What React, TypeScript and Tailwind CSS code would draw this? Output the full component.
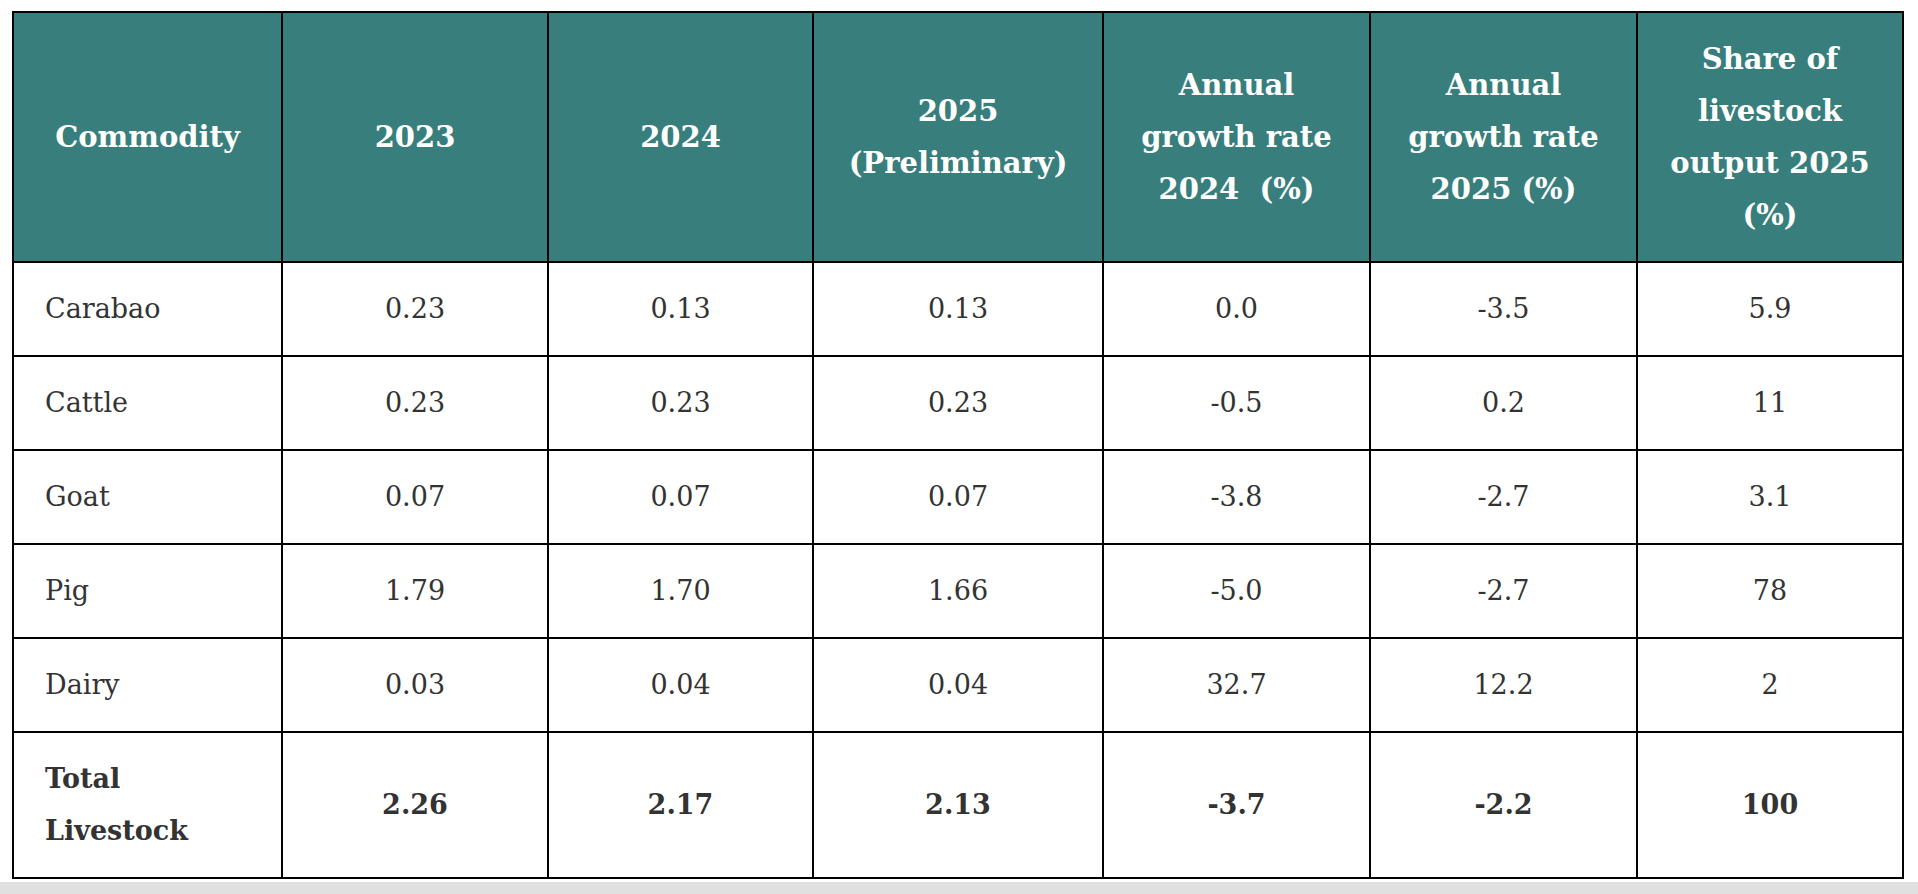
const headers = [
  ["Commodity"],
  ["2023"],
  ["2024"],
  ["2025", "(Preliminary)"],
  ["Annual", "growth rate", "2024\u00a0 (%)"],
  ["Annual", "growth rate", "2025 (%)"],
  ["Share of", "livestock", "output 2025", "(%)"],
];

const rows = [
  ["Carabao", "0.23", "0.13", "0.13", "0.0", "-3.5", "5.9"],
  ["Cattle", "0.23", "0.23", "0.23", "-0.5", "0.2", "11"],
  ["Goat", "0.07", "0.07", "0.07", "-3.8", "-2.7", "3.1"],
  ["Pig", "1.79", "1.70", "1.66", "-5.0", "-2.7", "78"],
  ["Dairy", "0.03", "0.04", "0.04", "32.7", "12.2", "2"],
];

const total = ["2.26", "2.17", "2.13", "-3.7", "-2.2", "100"];

const widths = ["w-[269px]", "w-[266px]", "w-[265px]", "w-[290px]", "w-[267px]", "w-[267px]", "w-[266px]"];

export default function App() {
  return (
    <div className="flex h-[894px] flex-col bg-white font-['DejaVu_Serif',Georgia,serif]">
      <div className="flex-1 pl-[12px] pt-[11px]">
        <table className="w-[1890px] table-fixed border-collapse border-2 border-black text-[27px] leading-[52px] text-[#333333]">
          <colgroup>
            {widths.map((w, i) => (
              <col key={i} className={w} />
            ))}
          </colgroup>
          <thead>
            <tr className="bg-[#387e7c]">
              {headers.map((h, i) => (
                <th
                  key={i}
                  className="h-[250px] border-2 border-black px-[12px] py-[20px] text-center align-middle text-[29px] font-bold text-white"
                >
                  {h.map((line, j) => (
                    <span key={j} className="block whitespace-nowrap">
                      {line}
                    </span>
                  ))}
                </th>
              ))}
            </tr>
          </thead>
          <tbody>
            {rows.map((r) => (
              <tr key={r[0]}>
                {r.map((c, i) => (
                  <td
                    key={i}
                    className={
                      "h-[94px] border-2 border-black py-[20px] align-middle " +
                      (i === 0 ? "pl-[31px] pr-[20px] text-left" : "px-[20px] text-center")
                    }
                  >
                    {c}
                  </td>
                ))}
              </tr>
            ))}
            <tr>
              <td className="h-[145px] border-2 border-black py-[20px] pl-[31px] pr-[20px] text-left align-middle font-bold">
                Total
                <br />
                Livestock
              </td>
              {total.map((c, i) => (
                <td
                  key={i}
                  className="border-2 border-black px-[20px] py-[20px] text-center align-middle font-bold"
                >
                  {c}
                </td>
              ))}
            </tr>
          </tbody>
        </table>
      </div>
      <div className="h-[12px] shrink-0 bg-[#e0e0e0]" />
    </div>
  );
}
